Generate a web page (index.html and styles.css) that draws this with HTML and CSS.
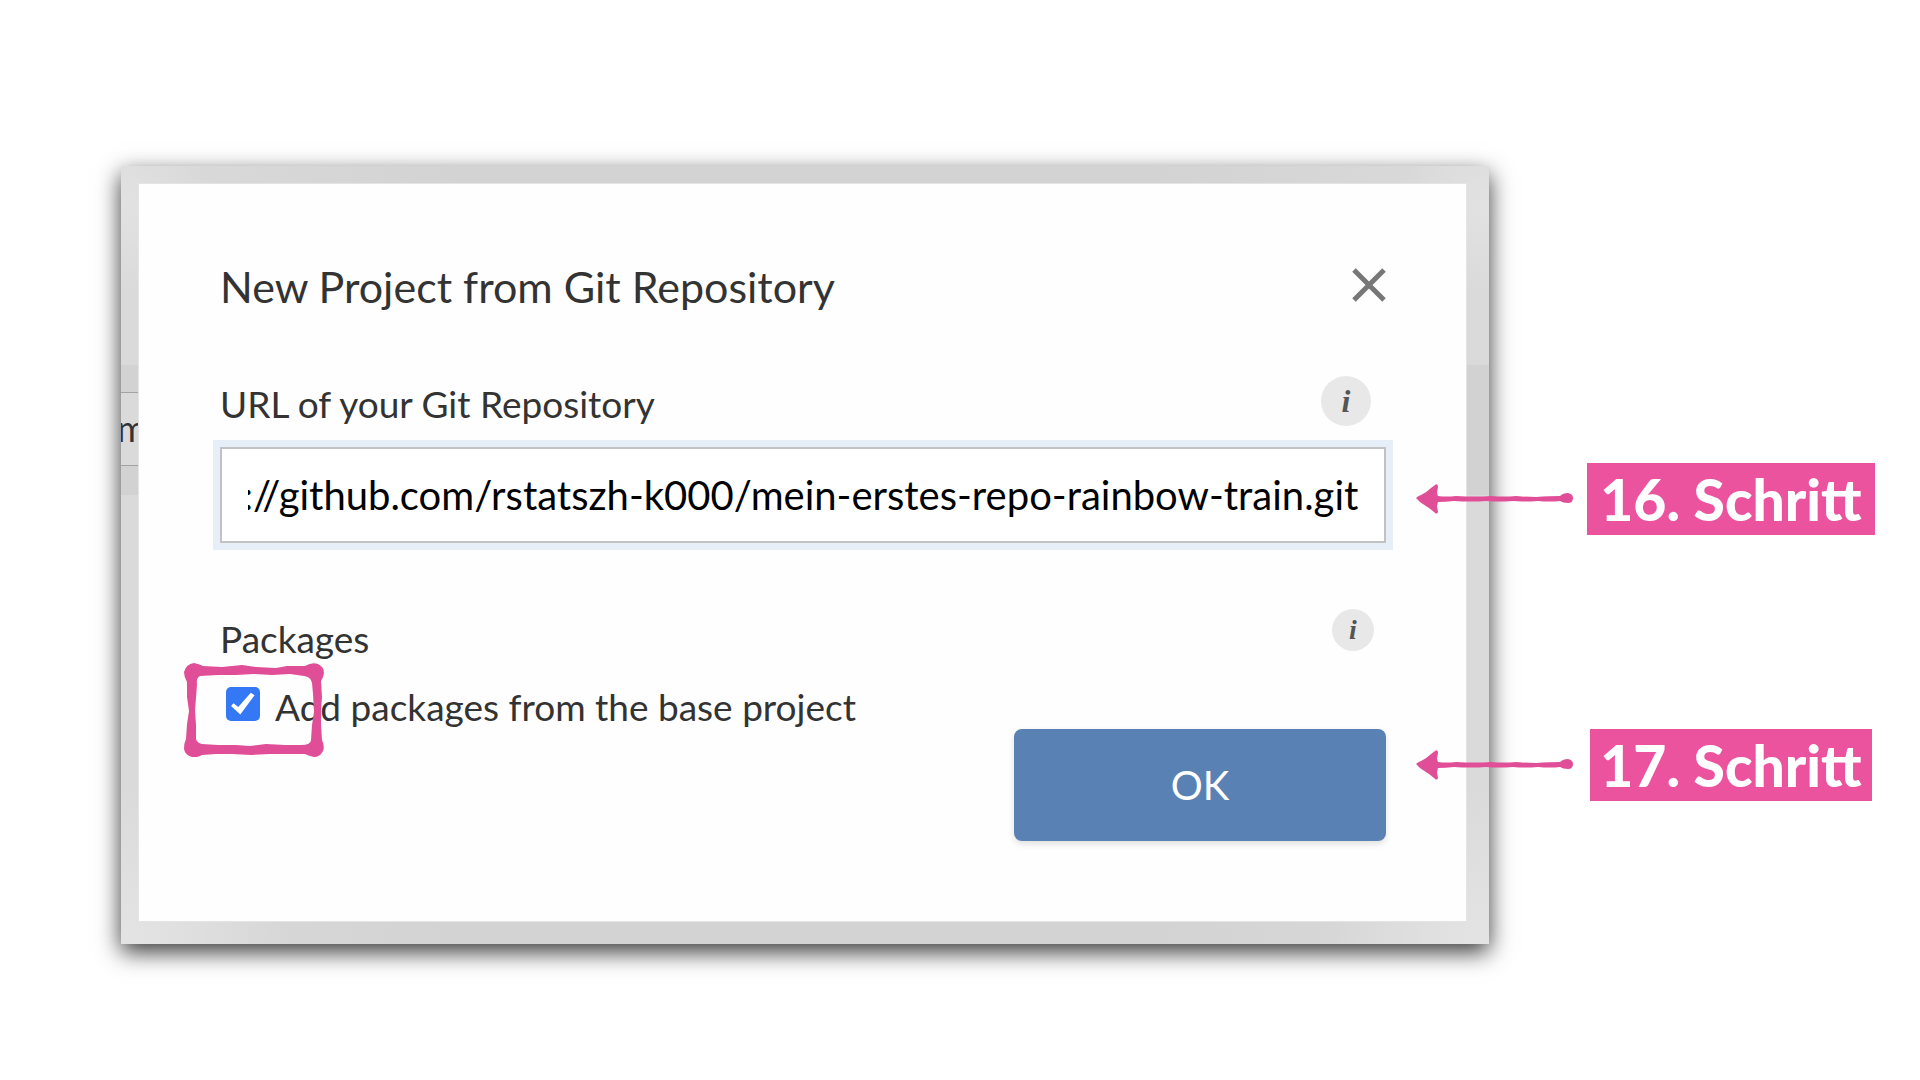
FILE: index.html
```html
<!DOCTYPE html>
<html lang="de">
<head>
<meta charset="utf-8">
<meta name="viewport" content="width=device-width, initial-scale=1">
<title>New Project from Git Repository</title>
<link rel="stylesheet" href="styles.css">
</head>
<body>
<svg class="defs" aria-hidden="true">
  <symbol id="arrow" viewBox="0 0 157 30">
    <path d="M0 14 Q2 12 5 11 Q11 8 15 4 L19 1 Q22 -1 22 3 L21 9 L22 12 Q30 13 40 12 Q60 13 75 12 Q88 13 100 12 Q112 13 120 13 Q134 12 144 12 Q147 9 152 9 Q157 10 157 14 Q157 19 152 19 Q147 19 144 17 Q134 18 122 17 Q108 18 97 17 Q82 18 70 17 Q55 18 38 17 Q29 18 22 18 L21 22 L22 28 Q21 31 18 28 L13 24 Q7 20 4 18 Z" fill="#e14e98"/>
  </symbol>
</svg>
<main class="slide">
  <section class="frame">
    <div class="backdrop" aria-hidden="true"><div class="backdrop-field">m</div></div>
    <form class="dialog">
      <header class="head">
        <h1 class="title">New Project from Git Repository</h1>
        <button class="close" type="button" aria-label="Close">
          <svg viewBox="0 0 34 34" width="34" height="34"><path d="M2 2 32 32M32 2 2 32" stroke="#777" stroke-width="5"/></svg>
        </button>
      </header>
      <div class="row">
        <label class="label" for="url">URL of your Git Repository</label>
        <button class="info" type="button" aria-label="Info">i</button>
      </div>
      <input class="url" id="url" type="text" spellcheck="false" value="https://github.com/rstatszh-k000/mein-erstes-repo-rainbow-train.git">
      <div class="row row-packages">
        <span class="label">Packages</span>
        <button class="info info-small" type="button" aria-label="Info">i</button>
      </div>
      <div class="option">
        <input class="check" id="base" type="checkbox" checked>
        <label class="label" for="base">Add packages from the base project</label>
        <svg class="marker" viewBox="0 0 140 94" aria-hidden="true">
          <path fill="#e14e98" fill-rule="evenodd" d="M10 0 Q15 1 19 3 L38 4 Q48 3 58 2 L72 4 L92 5 L103 3 L121 3 Q128 -1 134 1 Q140 4 140 10 Q139 15 137 18 L138 34 L137 47 L137 62 L138 77 Q141 84 139 88 Q136 94 130 94 Q125 93 121 91 L104 91 L86 91 L67 92 L48 91 L32 91 L18 92 Q13 95 8 94 Q1 92 0 86 Q0 80 2 76 L3 61 L5 48 L3 34 L3 19 Q0 14 0 9 Q2 1 10 0Z M16 13 Q12 15 13 21 L12 35 L11 47 L12 62 L12 76 Q13 80 18 81 L34 82 L52 82 L66 83 L82 81 L101 82 L117 82 Q127 82 127 77 L128 62 L130 49 L129 31 L128 20 Q127 14 120 13 L106 11 L88 12 L70 11 L52 12 L34 12Z"/>
        </svg>
      </div>
      <button class="ok" type="submit">OK</button>
    </form>
  </section>
  <ol class="steps">
    <li class="step"><span class="tag">16. Schritt</span><svg class="arrow" aria-hidden="true"><use href="#arrow"/></svg></li>
    <li class="step"><span class="tag tag-narrow">17. Schritt</span><svg class="arrow" aria-hidden="true"><use href="#arrow"/></svg></li>
  </ol>
</main>
<script src="script.js"></script>
</body>
</html>
```
FILE: styles.css
```css
* { box-sizing: border-box; }

body {
  margin: 0;
  background: #fff;
  color: #333;
  font-family: Lato, "Open Sans", sans-serif;
}

button, input { font: inherit; }

.defs { display: none; }

.slide {
  display: grid;
  grid-template-columns: 1fr 288px;
  column-gap: 98px;
  align-items: start;
  padding: 166px 45px 136px 121px;
}

/* Dimmed application that shows around the dialog */
.frame {
  position: relative;
  padding: 18px 23px 23px 18px;
  background:
    radial-gradient(circle at 0 40px, #e2e2e2, transparent 90px),
    radial-gradient(circle at 100% 40px, #e2e2e2, transparent 90px),
    radial-gradient(circle at 0 100%, #e4e4e4, transparent 160px),
    radial-gradient(circle at 100% 100%, #e4e4e4, transparent 160px),
    linear-gradient(90deg, #dadada, #d3d3d3 25%, #d3d3d3 75%, #dadada);
  box-shadow: 0 8px 22px rgba(0, 0, 0, .78);
}

.backdrop {
  position: absolute;
  inset: 199px 0 auto;
  padding: 27px 0 29px;
  overflow: hidden;
  background: #d2d2d2;
}

.backdrop-field {
  width: 50%;
  padding-bottom: 2px;
  border: solid #a2a2a2;
  border-width: 1px 0;
  background: #dadada;
  font-size: 36px;
  line-height: 70px;
  text-indent: -4px;
}

.dialog {
  position: relative;
  display: flex;
  flex-direction: column;
  padding: 77px 80px 80px 81px;
  background: #fefefe;
  outline: 1px solid #e4e4e4;
}

.head, .row {
  display: flex;
  justify-content: space-between;
}

.title {
  margin: 0;
  font-size: 43px;
  font-weight: 400;
  line-height: 52px;
}

.close {
  height: 34px;
  margin-top: 7px;
  padding: 0;
  border: 0;
  background: none;
}

.close svg { display: block; }

.row {
  height: 50px;
  margin: 63px 15px 21px 0;
}

.row-packages {
  height: 52px;
  margin: 66px 12px 24px 0;
}

.label {
  align-self: flex-end;
  font-size: 37px;
  line-height: 44px;
}

.info {
  width: 50px;
  height: 50px;
  padding: 0;
  border: 0;
  border-radius: 50%;
  background: #e8e8e8;
  color: #555;
  font: italic bold 32px/50px "Liberation Serif", serif;
}

.info-small {
  width: 42px;
  height: 42px;
  font-size: 28px;
  line-height: 42px;
}

.url {
  width: 100%;
  height: 96px;
  padding: 0 26px;
  border: 2px solid #c2c2c2;
  border-radius: 0;
  outline: none;
  background: #fff;
  box-shadow: 0 0 0 7px #e6eef8;
  color: #000;
  font-size: 40px;
}

.option {
  position: relative;
  display: flex;
  align-items: flex-start;
  gap: 15px;
  padding-left: 6px;
}

.check {
  appearance: none;
  width: 34px;
  height: 34px;
  margin: 2px 0 0;
  border-radius: 5px;
  background: #3478f6;
}

.check:checked::before {
  content: "";
  display: block;
  height: 34px;
  background: #fff;
  clip-path: polygon(15% 56%, 22% 48%, 36% 59%, 73% 17%, 84% 24%, 42% 81%);
}

.marker {
  position: absolute;
  top: -22px;
  left: -36px;
  width: 140px;
  height: 94px;
}

.ok {
  align-self: flex-end;
  width: 372px;
  height: 112px;
  border: 0;
  border-radius: 8px;
  background: #5981b3;
  box-shadow: 0 3px 6px rgba(0, 0, 0, .12);
  color: #fff;
  font-size: 40px;
}

.steps {
  display: flex;
  flex-direction: column;
  gap: 194px;
  margin: 0;
  padding: 297px 0 0;
  list-style: none;
}

.step {
  position: relative;
  color: #fff;
  font-family: Chalkduster, Lato, sans-serif;
  font-size: 57px;
  font-weight: 900;
  line-height: 72px;
  text-align: center;
}

.tag {
  display: block;
  margin: 0 auto;
  background: #ec539f;
}

.tag-narrow { width: 282px; }

.arrow {
  position: absolute;
  top: 21px;
  right: calc(100% + 14px);
  width: 157px;
  height: 30px;
}
```
FILE: script.js
```js
// Keep the end of a long repository address in view.
const url = document.getElementById('url');
url.scrollLeft = url.scrollWidth;
```
